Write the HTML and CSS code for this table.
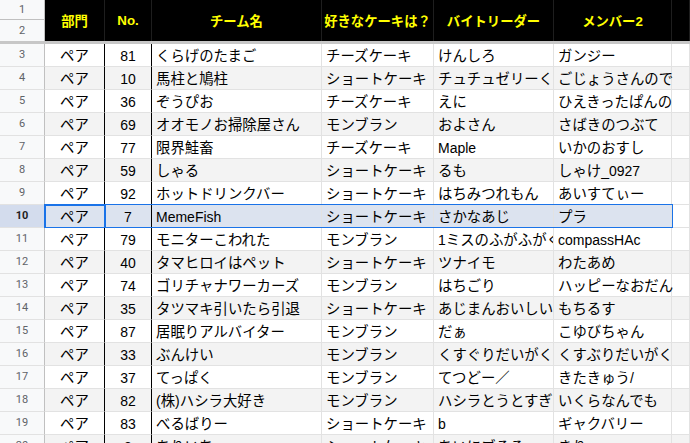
FILE: index.html
```html
<!DOCTYPE html>
<html lang="ja">
<head>
<meta charset="utf-8">
<title>Sheet</title>
<link rel="stylesheet" href="styles.css">
</head>
<body>
<div class="sheet">
  <div class="grid head">
    <div class="rh rh1">1</div>
    <div class="rh rh2">2</div>
    <div class="hc">部門</div>
    <div class="hc">No.</div>
    <div class="hc">チーム名</div>
    <div class="hc">好きなケーキは？</div>
    <div class="hc">バイトリーダー</div>
    <div class="hc">メンバー2</div>
    <div class="hc"></div>
  </div>
  <div class="freeze"></div>

  <div class="grid row"><div class="rh">3</div><div class="a">ペア</div><div class="b"><span class="lt">81</span></div><div class="t">くらげのたまご</div><div class="t">チーズケーキ</div><div class="t">けんしろ</div><div class="t f">ガンジー</div><div class="g"></div></div>
  <div class="grid row alt"><div class="rh">4</div><div class="a">ペア</div><div class="b"><span class="lt">10</span></div><div class="t">馬柱と鳩柱</div><div class="t">ショートケーキ</div><div class="t">チュチュゼリーくん</div><div class="t f">ごじょうさんので</div><div class="g"></div></div>
  <div class="grid row"><div class="rh">5</div><div class="a">ペア</div><div class="b"><span class="lt">36</span></div><div class="t">ぞうぴお</div><div class="t">チーズケーキ</div><div class="t">えに</div><div class="t f">ひえきったぱんの</div><div class="g"></div></div>
  <div class="grid row alt"><div class="rh">6</div><div class="a">ペア</div><div class="b"><span class="lt">69</span></div><div class="t">オオモノお掃除屋さん</div><div class="t">モンブラン</div><div class="t">およさん</div><div class="t f">さばきのつぶて</div><div class="g"></div></div>
  <div class="grid row"><div class="rh">7</div><div class="a">ペア</div><div class="b"><span class="lt">77</span></div><div class="t">限界鮭畜</div><div class="t">チーズケーキ</div><div class="t"><span class="lt">Maple</span></div><div class="t f">いかのおすし</div><div class="g"></div></div>
  <div class="grid row alt"><div class="rh">8</div><div class="a">ペア</div><div class="b"><span class="lt">59</span></div><div class="t">しゃる</div><div class="t">ショートケーキ</div><div class="t">るも</div><div class="t f">しゃけ<span class="lt">_0927</span></div><div class="g"></div></div>
  <div class="grid row"><div class="rh">9</div><div class="a">ペア</div><div class="b"><span class="lt">92</span></div><div class="t">ホットドリンクバー</div><div class="t">ショートケーキ</div><div class="t">はちみつれもん</div><div class="t f">あいすてぃー</div><div class="g"></div></div>
  <div class="grid row sel"><div class="rh">10</div><div class="a">ペア</div><div class="b"><span class="lt">7</span></div><div class="t"><span class="lt">MemeFish</span></div><div class="t">ショートケーキ</div><div class="t">さかなあじ</div><div class="t f">プラ</div><div class="g"></div><div class="range"></div><div class="active"></div></div>
  <div class="grid row"><div class="rh">11</div><div class="a">ペア</div><div class="b"><span class="lt">79</span></div><div class="t">モニターこわれた</div><div class="t">モンブラン</div><div class="t"><span class="lt">1</span>ミスのふがふがく</div><div class="t f"><span class="lt">compassHAc</span></div><div class="g"></div></div>
  <div class="grid row alt"><div class="rh">12</div><div class="a">ペア</div><div class="b"><span class="lt">40</span></div><div class="t">タマヒロイはペット</div><div class="t">ショートケーキ</div><div class="t">ツナイモ</div><div class="t f">わたあめ</div><div class="g"></div></div>
  <div class="grid row"><div class="rh">13</div><div class="a">ペア</div><div class="b"><span class="lt">74</span></div><div class="t">ゴリチャナワーカーズ</div><div class="t">モンブラン</div><div class="t">はちごり</div><div class="t f">ハッピーなおだん</div><div class="g"></div></div>
  <div class="grid row alt"><div class="rh">14</div><div class="a">ペア</div><div class="b"><span class="lt">35</span></div><div class="t">タツマキ引いたら引退</div><div class="t">ショートケーキ</div><div class="t">あじまんおいしい</div><div class="t f">もちるす</div><div class="g"></div></div>
  <div class="grid row"><div class="rh">15</div><div class="a">ペア</div><div class="b"><span class="lt">87</span></div><div class="t">居眠りアルバイター</div><div class="t">モンブラン</div><div class="t">だぁ</div><div class="t f">こゆびちゃん</div><div class="g"></div></div>
  <div class="grid row alt"><div class="rh">16</div><div class="a">ペア</div><div class="b"><span class="lt">33</span></div><div class="t">ぶんけい</div><div class="t">モンブラン</div><div class="t">くすぐりだいがくせい</div><div class="t f">くすぶりだいがく</div><div class="g"></div></div>
  <div class="grid row"><div class="rh">17</div><div class="a">ペア</div><div class="b"><span class="lt">37</span></div><div class="t">てっぱく</div><div class="t">モンブラン</div><div class="t">てつどー／</div><div class="t f">きたきゅう<span class="lt">/</span></div><div class="g"></div></div>
  <div class="grid row alt"><div class="rh">18</div><div class="a">ペア</div><div class="b"><span class="lt">82</span></div><div class="t"><span class="lt">(</span>株<span class="lt">)</span>ハシラ大好き</div><div class="t">モンブラン</div><div class="t">ハシラとうとすぎ</div><div class="t f">いくらなんでも</div><div class="g"></div></div>
  <div class="grid row"><div class="rh">19</div><div class="a">ペア</div><div class="b"><span class="lt">83</span></div><div class="t">べるばりー</div><div class="t">ショートケーキ</div><div class="t"><span class="lt">b</span></div><div class="t f">ギャクバリー</div><div class="g"></div></div>
  <div class="grid row alt"><div class="rh">20</div><div class="a">ペア</div><div class="b"><span class="lt">8</span></div><div class="t">ありいち</div><div class="t">ショートケーキ</div><div class="t">あいにブるる</div><div class="t f">きり</div><div class="g"></div></div>
</div>
</body>
</html>
```

FILE: styles.css
```css
* {
  box-sizing: border-box;
  margin: 0;
  padding: 0;
}

html, body {
  width: 690px;
  height: 443px;
  overflow: hidden;
  background: #ffffff;
}

body {
  font-family: "Noto Sans CJK JP", sans-serif;
  color: #000000;
}

.sheet {
  width: 690px;
}

.grid {
  display: grid;
  grid-template-columns: 45px 60px 47px 170px 112px 120px 118px 1fr;
}

/* header (frozen rows 1-2) */
.head {
  grid-template-rows: 20px 21px;
  background: #000000;
}

.head .rh {
  grid-column: 1;
  background: #f8f9fa;
  border-right: 1px solid #c0c0c0;
  font: 11px Roboto, "Liberation Sans", sans-serif;
  color: #5f6368;
  display: flex;
  align-items: center;
  justify-content: center;
}

.head .rh1 {
  grid-row: 1;
  border-bottom: 1px solid #c0c0c0;
}

.head .rh2 {
  grid-row: 2;
}

.hc {
  grid-row: 1 / 3;
  display: flex;
  align-items: center;
  justify-content: center;
  color: #ffff00;
  font: bold 13.33px "Liberation Sans", "Noto Sans CJK JP", sans-serif;
  border-right: 1px solid #1e1e1e;
  white-space: nowrap;
}

.freeze {
  height: 3px;
  background: #c7c7c7;
}

/* body rows */
.row {
  height: 23px;
  position: relative;
  background: #ffffff;
}

.row > div {
  border-bottom: 1px solid #e2e2e2;
  border-right: 1px solid #e2e2e2;
  line-height: 22px;
  height: 23px;
  white-space: nowrap;
  overflow: hidden;
  font-size: 14.4px;
}

.row .rh {
  background: #f8f9fa;
  border-right-color: #c0c0c0;
  font: 11px Roboto, "Liberation Sans", sans-serif;
  line-height: 22px;
  color: #5f6368;
  text-align: center;
}

.row .a,
.row .b {
  text-align: center;
  border-right-color: #000000;
}

.row .t {
  padding-left: 4px;
}

.row .f {
  overflow: visible;
}

.lt {
  font-family: "Liberation Sans", sans-serif;
  font-size: 14px;
}

.row.alt {
  background: #f3f3f3;
}

.sel > .a,
.sel > .b,
.sel > .t {
  background: #dce3ef;
}

.sel > .rh {
  background: #d3dced;
  color: #1f1f1f;
  font-weight: bold;
}

.row > .range {
  position: absolute;
  left: 45px;
  top: -1px;
  width: 628px;
  height: 24px;
  border: 1px solid #1a73e8;
  background: transparent;
  pointer-events: none;
}

.row > .active {
  position: absolute;
  left: 44px;
  top: -1px;
  width: 62px;
  height: 25px;
  border: 2px solid #1a73e8;
  background: transparent;
  pointer-events: none;
}
```
